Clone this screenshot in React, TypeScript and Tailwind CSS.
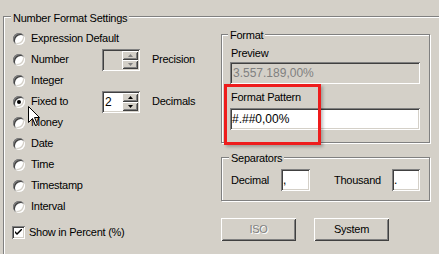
import React from "react";

function Radio({ checked }: { checked?: boolean }) {
  return (
    <div className="w-[12px] h-[12px] rounded-full bg-white shrink-0 flex items-center justify-center shadow-[inset_1px_1px_0_#808080,inset_-1px_-1px_0_#ffffff,inset_2px_2px_0_#404040,inset_-2px_-2px_0_#d4d0c8]">
      {checked && <div className="w-[4px] h-[4px] rounded-full bg-black" />}
    </div>
  );
}

function Arrow({ up, disabled }: { up?: boolean; disabled?: boolean }) {
  const c = disabled ? "#808080" : "#000000";
  return (
    <svg width="5" height="3" viewBox="0 0 5 3" className="block">
      {up ? (
        <polygon points="2.5,0 5,3 0,3" fill={c} />
      ) : (
        <polygon points="0,0 5,0 2.5,3" fill={c} />
      )}
    </svg>
  );
}

function Spin({ value, disabled }: { value?: string; disabled?: boolean }) {
  return (
    <div
      className={`w-[38px] h-[22px] p-[2px] flex shrink-0 shadow-[inset_1px_1px_0_#808080,inset_-1px_-1px_0_#ffffff,inset_2px_2px_0_#404040,inset_-2px_-2px_0_#d4d0c8] ${
        disabled ? "bg-[#d4d0c8]" : "bg-white"
      }`}
    >
      <div className="flex-1 pl-[1px] text-[12px] leading-[18px]">{value}</div>
      <div className="w-[16px] flex flex-col">
        <div className="h-[9px] bg-[#d4d0c8] flex items-center justify-center shadow-[inset_1px_1px_0_#ffffff,inset_-1px_-1px_0_#404040,inset_2px_2px_0_#d4d0c8,inset_-2px_-2px_0_#808080]">
          <Arrow up disabled={disabled} />
        </div>
        <div className="h-[9px] bg-[#d4d0c8] flex items-center justify-center shadow-[inset_1px_1px_0_#ffffff,inset_-1px_-1px_0_#404040,inset_2px_2px_0_#d4d0c8,inset_-2px_-2px_0_#808080]">
          <Arrow disabled={disabled} />
        </div>
      </div>
    </div>
  );
}

function Row({ children }: { children: React.ReactNode }) {
  return <div className="h-[21px] flex items-center">{children}</div>;
}

function RadioLabel({ label, checked, w }: { label: string; checked?: boolean; w?: boolean }) {
  return (
    <div className={`flex items-center ${w ? "w-[89px]" : ""}`}>
      <Radio checked={checked} />
      <span className="ml-[6px] leading-[13px]">{label}</span>
    </div>
  );
}

function Button({ label, disabled }: { label: string; disabled?: boolean }) {
  return (
    <div className="w-[75px] h-[23px] bg-[#d4d0c8] flex items-center justify-center shadow-[inset_1px_1px_0_#ffffff,inset_-1px_-1px_0_#404040,inset_2px_2px_0_#d4d0c8,inset_-2px_-2px_0_#808080]">
      <span
        className={
          disabled
            ? "text-[#808080] [text-shadow:1px_1px_0_#ffffff] leading-[13px]"
            : "leading-[13px]"
        }
      >
        {label}
      </span>
    </div>
  );
}

export default function App() {
  return (
    <div className="w-[439px] h-[254px] bg-[#d4d0c8] overflow-hidden relative text-[11px] text-black tracking-[-0.25px] font-['Liberation_Sans',Arial,sans-serif]">
      <div className="ml-[3px] mt-[16px] w-[470px] h-[260px] relative border border-[#808080] shadow-[1px_1px_0_#ffffff,inset_1px_1px_0_#ffffff] flex">
        <span className="absolute left-[7px] top-[-5px] px-[2px] bg-[#d4d0c8] leading-[13px]">
          Number Format Settings
        </span>

        {/* left column */}
        <div className="w-[217px] pl-[9px] pt-[11px] flex flex-col">
          <Row>
            <RadioLabel label="Expression Default" />
          </Row>
          <Row>
            <RadioLabel label="Number" w />
            <Spin disabled />
            <span className="ml-[12px] leading-[13px]">Precision</span>
          </Row>
          <Row>
            <RadioLabel label="Integer" />
          </Row>
          <Row>
            <RadioLabel label="Fixed to" checked w />
            <Spin value="2" />
            <span className="ml-[12px] leading-[13px]">Decimals</span>
          </Row>
          <Row>
            <RadioLabel label="Money" />
          </Row>
          <Row>
            <RadioLabel label="Date" />
          </Row>
          <Row>
            <RadioLabel label="Time" />
          </Row>
          <Row>
            <RadioLabel label="Timestamp" />
          </Row>
          <Row>
            <RadioLabel label="Interval" />
          </Row>
          <div className="h-[21px] mt-[5px] flex items-center">
            <div className="ml-[-1px] w-[13px] h-[13px] bg-white shrink-0 flex items-center justify-center shadow-[inset_1px_1px_0_#808080,inset_-1px_-1px_0_#ffffff,inset_2px_2px_0_#404040,inset_-2px_-2px_0_#d4d0c8]">
              <svg width="7" height="7" viewBox="0 0 7 7" className="block">
                <path d="M0 2 L2 4 L7 -1 L7 1 L2 6 L0 4 Z" fill="#000000" />
              </svg>
            </div>
            <span className="ml-[4px] leading-[13px]">Show in Percent (%)</span>
          </div>
        </div>

        {/* right column */}
        <div className="pt-[17px] flex flex-col">
          <div className="w-[209px] h-[109px] relative border border-[#808080] shadow-[1px_1px_0_#ffffff,inset_1px_1px_0_#ffffff] pl-[8px] pt-[12px] flex flex-col">
            <span className="absolute left-[6px] top-[-6px] px-[2px] bg-[#d4d0c8] leading-[13px]">Format</span>
            <span className="ml-[1px] h-[13px] leading-[13px]">Preview</span>
            <div className="mt-[2px] w-[190px] h-[22px] bg-[#d4d0c8] px-[3px] flex items-center text-[12px] text-[#808080] tracking-normal shadow-[inset_1px_1px_0_#808080,inset_-1px_-1px_0_#ffffff,inset_2px_2px_0_#404040,inset_-2px_-2px_0_#d4d0c8]">
              3.557.189,00%
            </div>
            <span className="mt-[7px] ml-[1px] h-[13px] leading-[13px]">Format Pattern</span>
            <div className="mt-[4px] w-[190px] h-[22px] bg-white px-[2px] flex items-center text-[12px] tracking-normal shadow-[inset_1px_1px_0_#808080,inset_-1px_-1px_0_#ffffff,inset_2px_2px_0_#404040,inset_-2px_-2px_0_#d4d0c8]">
              #.##0,00%
            </div>
          </div>

          <div className="mt-[14px] w-[209px] h-[44px] relative border border-[#808080] shadow-[1px_1px_0_#ffffff,inset_1px_1px_0_#ffffff] pl-[9px] pt-[11px] flex items-start">
            <span className="absolute left-[7px] top-[-6px] px-[2px] bg-[#d4d0c8] leading-[13px]">Separators</span>
            <div className="h-[22px] flex items-center">
              <span className="w-[50px] leading-[13px]">Decimal</span>
              <div className="w-[29px] h-[22px] bg-white px-[2px] flex items-center text-[12px] shadow-[inset_1px_1px_0_#808080,inset_-1px_-1px_0_#ffffff,inset_2px_2px_0_#404040,inset_-2px_-2px_0_#d4d0c8]">
                ,
              </div>
              <span className="ml-[24px] w-[58px] leading-[13px]">Thousand</span>
              <div className="w-[28px] h-[22px] bg-white px-[2px] flex items-center text-[12px] shadow-[inset_1px_1px_0_#808080,inset_-1px_-1px_0_#ffffff,inset_2px_2px_0_#404040,inset_-2px_-2px_0_#d4d0c8]">
                .
              </div>
            </div>
          </div>

          <div className="mt-[17px] flex gap-[18px]">
            <Button label="ISO" disabled />
            <Button label="System" />
          </div>
        </div>
      </div>

      {/* red highlight annotation */}
      <div className="absolute left-[224px] top-[84px] w-[97px] h-[61px] border-[3px] border-[#ee1c1c] shadow-[2px_2px_3px_rgba(0,0,0,0.25)]" />

      {/* mouse cursor */}
      <svg
        width="13"
        height="22"
        viewBox="0 0 13 22"
        className="absolute left-[28px] top-[106px]"
      >
        <path
          d="M0.5 0.5 L0.5 16.5 L4.5 12.5 L7.5 19.5 L9.5 18.5 L6.5 11.5 L11.5 11.5 Z"
          fill="#ffffff"
          stroke="#000000"
          strokeWidth="1"
          strokeLinejoin="miter"
        />
      </svg>
    </div>
  );
}
